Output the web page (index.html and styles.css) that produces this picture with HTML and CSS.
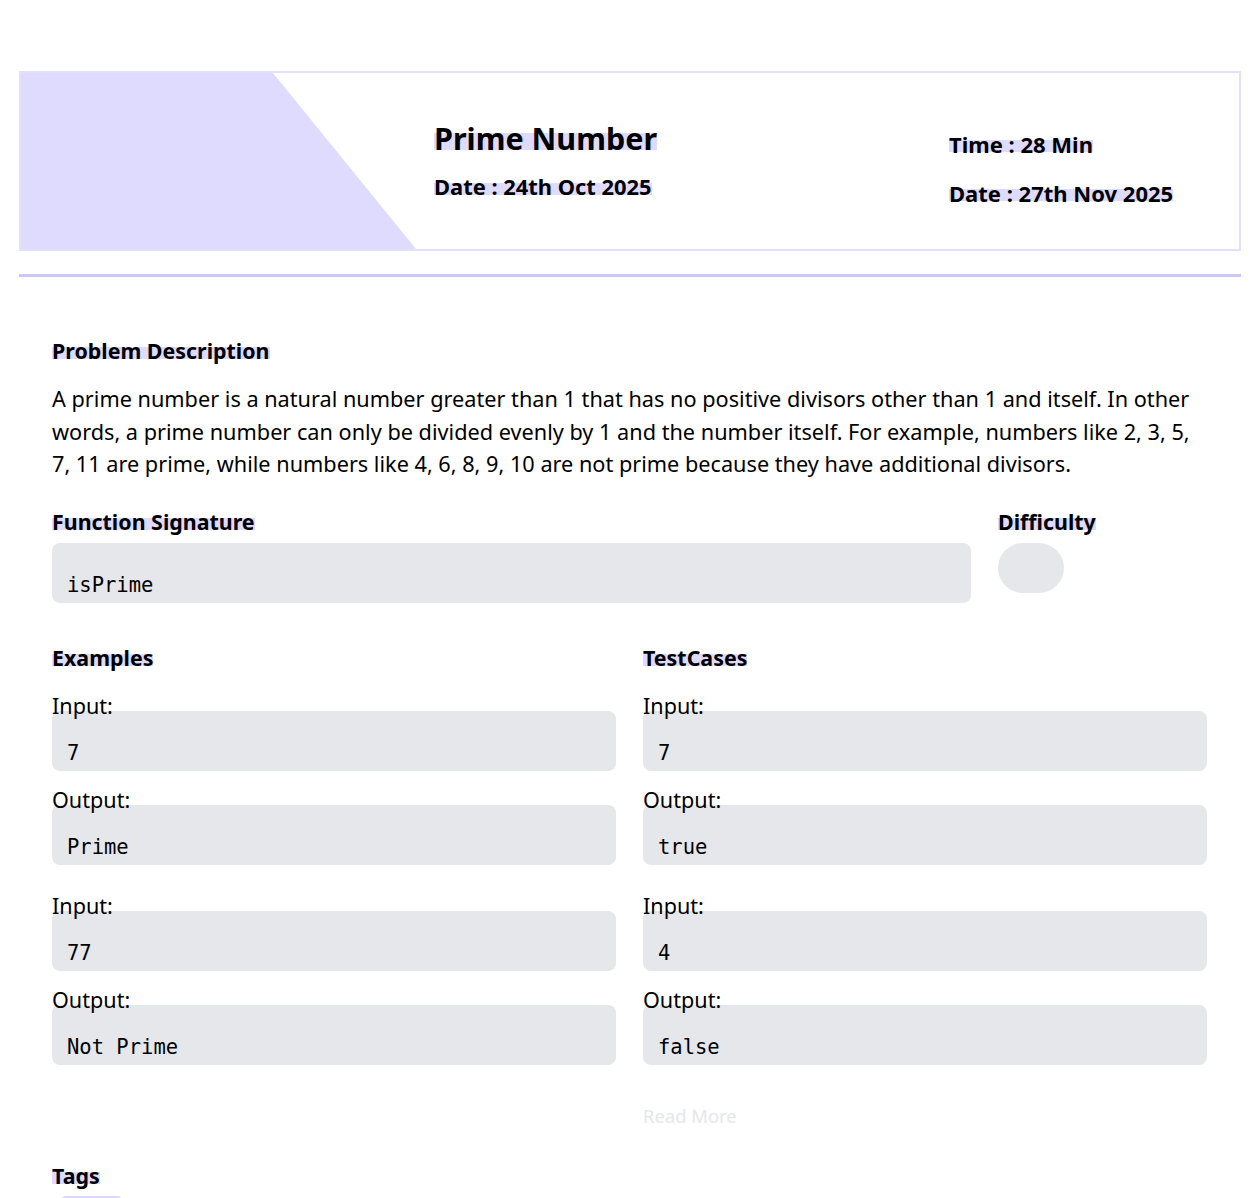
FILE: index.html
```html
<!DOCTYPE html>
<html lang="en">
<head>
    <meta charset="UTF-8">
    <title>Prime Number</title>
    <meta name="viewport" content="width=device-width, initial-scale=1.0">
    <link rel="stylesheet" href="styles.css">
</head>
<body>
    <div class="page">
        <div class="problem-header">
            <div class="header-deco"></div>
            <div class="header-title">
                <h1><span class="mark">Prime Number</span></h1>
                <p class="header-date"><span class="mark">Date : 24th Oct 2025</span></p>
            </div>
            <div class="header-meta">
                <p><span class="mark">Time : 28 Min</span></p>
                <p class="meta-date"><span class="mark">Date : 27th Nov 2025</span></p>
            </div>
        </div>
        <div class="divider"></div>

        <div class="content">
            <h3 class="section-title"><span class="mark">Problem Description</span></h3>
            <p class="description">A prime number is a natural number greater than 1 that has no positive divisors other than 1 and itself. In other words, a prime number can only be divided evenly by 1 and the number itself. For example, numbers like 2, 3, 5, 7, 11 are prime, while numbers like 4, 6, 8, 9, 10 are not prime because they have additional divisors.</p>

            <div class="signature-row">
                <div class="signature">
                    <h3 class="section-title"><span class="mark">Function Signature</span></h3>
                    <div class="code-box">isPrime</div>
                </div>
                <div class="difficulty">
                    <h3 class="section-title"><span class="mark">Difficulty</span></h3>
                    <div class="difficulty-pill"></div>
                </div>
            </div>

            <div class="cases-row">
                <div class="cases-col">
                    <h3 class="section-title"><span class="mark">Examples</span></h3>
                    <div class="case">
                        <div class="case-label">Input:</div>
                        <div class="code-box">7</div>
                        <div class="case-label">Output:</div>
                        <div class="code-box">Prime</div>
                    </div>
                    <div class="case">
                        <div class="case-label">Input:</div>
                        <div class="code-box">77</div>
                        <div class="case-label">Output:</div>
                        <div class="code-box">Not Prime</div>
                    </div>
                </div>
                <div class="cases-col">
                    <h3 class="section-title"><span class="mark">TestCases</span></h3>
                    <div class="case">
                        <div class="case-label">Input:</div>
                        <div class="code-box">7</div>
                        <div class="case-label">Output:</div>
                        <div class="code-box">true</div>
                    </div>
                    <div class="case">
                        <div class="case-label">Input:</div>
                        <div class="code-box">4</div>
                        <div class="case-label">Output:</div>
                        <div class="code-box">false</div>
                    </div>
                    <a class="read-more" href="#">Read More</a>
                </div>
            </div>

            <h3 class="section-title tags-title"><span class="mark">Tags</span></h3>
            <div class="tags">
                <span class="tag">Math</span>
            </div>
        </div>
    </div>
</body>
</html>
```

FILE: styles.css
```css
/* Global Reset */
* {
    margin: 0;
    padding: 0;
    box-sizing: border-box;
}
body {
    font-family: 'Noto Sans', 'Open Sans', sans-serif;
    background: #fff;
    color: #000;
    overflow: hidden;
}
.page {
    margin: 0 19px;
    padding-top: 71px;
}

/* highlighter behind headings */
.mark {
    background: linear-gradient(to bottom, transparent 38%, #dfdbff 38%, #dfdbff 78%, transparent 78%);
}

/* Header card */
.problem-header {
    display: flex;
    height: 180px;
    border: 2px solid #e3e0fd;
}
.header-deco {
    width: 395px;
    flex-shrink: 0;
    background-color: #dfdbff;
    clip-path: polygon(0 0, 252px 0, 100% 100%, 0 100%);
}
.header-title {
    flex: 1;
    padding: 45px 0 0 18px;
}
.header-title h1 {
    font-size: 30.5px;
    line-height: 40px;
    font-weight: 700;
}
.header-date {
    margin-top: 15px;
    font-size: 21.9px;
    line-height: 28px;
    font-weight: 700;
}
.header-meta {
    width: 290px;
    padding-top: 57px;
    font-size: 22px;
    line-height: 28px;
    font-weight: 700;
}
.meta-date {
    margin-top: 21px;
}
.divider {
    height: 3px;
    margin-top: 23px;
    background-color: #cdc8f7;
}

/* Body */
.content {
    padding: 60px 34px 0 33px;
}
.section-title {
    font-size: 21.4px;
    line-height: 28px;
    font-weight: 700;
}
.description {
    margin-top: 18px;
    font-size: 21.7px;
    line-height: 32.5px;
}
.signature-row {
    display: flex;
    gap: 27px;
    margin-top: 27px;
}
.signature {
    flex: 1;
}
.difficulty {
    width: 209px;
}
.code-box {
    margin-top: 7px;
    padding: 30px 15px 6px;
    height: 60px;
    background-color: #e5e7eb;
    border-radius: 8px;
    font-family: 'DejaVu Sans Mono', monospace;
    font-size: 20.5px;
    line-height: 24px;
}
.difficulty-pill {
    margin-top: 7px;
    width: 66px;
    height: 50px;
    border-radius: 25px;
    background-color: #e5e7eb;
}

.cases-row {
    display: grid;
    grid-template-columns: 1fr 1fr;
    gap: 27px;
    margin-top: 41px;
}
.case {
    margin-top: 20px;
}
.case + .case {
    margin-top: 27px;
}
.case-label {
    font-size: 21.6px;
    line-height: 28px;
    margin-bottom: -9px;
}
.case .code-box {
    margin-top: 0;
}
.code-box + .case-label {
    margin-top: 15px;
}
.read-more {
    display: block;
    margin-top: 39px;
    font-size: 18.4px;
    line-height: 24px;
    color: #e5e7eb;
    text-decoration: none;
}

.tags-title {
    margin-top: 34px;
}
.tags {
    margin-top: 6px;
    padding-left: 8px;
}
.tag {
    display: inline-block;
    padding: 4px 10px;
    border: 2px solid #dcd7ff;
    border-radius: 6px;
    font-size: 16px;
}
```
